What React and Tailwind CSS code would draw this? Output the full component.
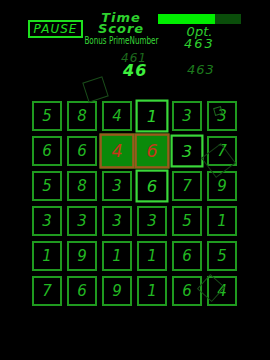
const board = [
  [5, 8, 4, 1, 3, 3],
  [6, 6, 4, 6, 3, 7],
  [5, 8, 3, 6, 7, 9],
  [3, 3, 3, 3, 5, 1],
  [1, 9, 1, 1, 6, 5],
  [7, 6, 9, 1, 6, 4],
];

// cells touched by the current chain
const selected = ["1-2", "1-3"];
const glowing = ["0-3", "1-4", "2-3"];

const font = { fontFamily: '"DejaVu Sans", sans-serif' };

function Cell({ value, id }) {
  if (selected.includes(id)) {
    return (
      <div className="w-[30px] h-[30px] flex items-center justify-center scale-[1.17] border-2 border-[#9a5a1c] bg-[#0a8a0a] text-[#c8361a] text-[15px] italic">
        {value}
      </div>
    );
  }
  if (glowing.includes(id)) {
    return (
      <div className="w-[30px] h-[30px] flex items-center justify-center scale-110 border-2 border-[#3ad83a] text-[#2ed02e] text-[15px] italic">
        {value}
      </div>
    );
  }
  return (
    <div className="w-[30px] h-[30px] flex items-center justify-center border-2 border-[#1f9a1f] text-[#22b822] text-[15px] italic">
      {value}
    </div>
  );
}

export default function App() {
  return (
    <div className="relative w-[270px] h-[360px] bg-black overflow-hidden" style={font}>
      <div className="flex pl-[28px] pt-[12px]">
        <div className="mt-[8px] w-[55px] h-[18px] border-2 border-[#1ee01e] flex items-center justify-center text-[#1ee01e] text-[12px] italic tracking-[1px] leading-none">
          PAUSE
        </div>
        <div className="ml-[4px] w-[68px] flex flex-col items-center text-[#2ed02e] italic">
          <span className="text-[13px] leading-[11px] font-bold tracking-[1px]">Time</span>
          <span className="text-[13px] leading-[12px] font-bold tracking-[1px]">Score</span>
          <span className="mt-[1px] text-[10px] leading-[10px] not-italic scale-x-[0.72] whitespace-nowrap text-[#38d838]">
            Bonus PrimeNumber
          </span>
        </div>
        <div className="ml-[3px] w-[83px] flex flex-col items-center">
          <div className="mt-[2px] w-[83px] h-[10px] flex bg-[#0a4d0a]">
            <div className="w-[57px] bg-[#00ee00]" />
          </div>
          <span className="mt-[2px] text-[#2ed02e] text-[13px] leading-[12px] italic">0pt.</span>
          <span className="text-[#2ed02e] text-[13px] leading-[12px] italic tracking-[2px]">463</span>
        </div>
      </div>

      <div className="absolute left-[121px] top-[51px] text-[#1d6a1d] text-[12px] leading-[14px] italic tracking-[1px]">461</div>
      <div className="absolute left-[123px] top-[63px] text-[#3ef03e] text-[16px] leading-[16px] font-bold italic tracking-[1px]">46</div>
      <div className="absolute left-[187px] top-[63px] text-[#1d7a1d] text-[13px] leading-[14px] italic tracking-[1px]">463</div>

      <div className="grid grid-cols-[repeat(6,30px)] gap-[5px] pl-[32px] mt-[51px]">
        {board.map((row, r) =>
          row.map((v, c) => <Cell key={r + "-" + c} id={r + "-" + c} value={v} />)
        )}
      </div>

      <div className="absolute left-[85px] top-[79px] w-[21px] h-[21px] border border-[#1a4d1a] -rotate-[18deg]" />
      <div className="absolute left-[214px] top-[107px] w-[8px] h-[8px] border border-[#1f6a1f] -rotate-[15deg]" />
      <div className="absolute left-[206px] top-[148px] w-[25px] h-[25px] border border-[#163d16] -rotate-[37deg]" />
      <div className="absolute left-[201px] top-[278px] w-[20px] h-[20px] border border-[#1a4d1a] -rotate-[48deg]" />
    </div>
  );
}
